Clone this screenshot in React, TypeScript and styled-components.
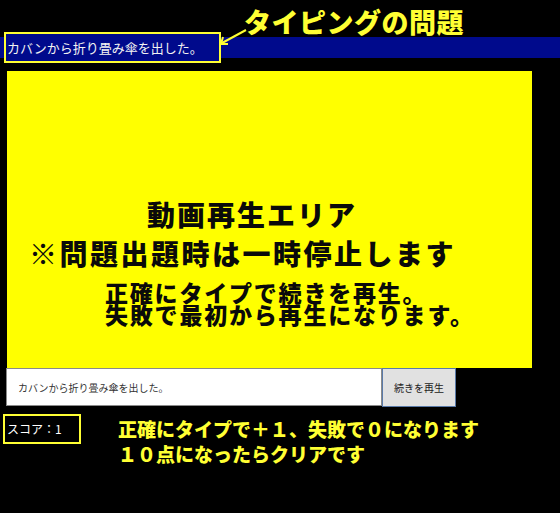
import React from "react";
import styled, { createGlobalStyle } from "styled-components";

const GlobalStyle = createGlobalStyle`
  html, body {
    margin: 0;
    padding: 0;
    background: #000;
  }
  body {
    font-family: "Noto Sans CJK JP", "Noto Sans", sans-serif;
  }
`;

const question = "カバンから折り畳み傘を出した。";

export default function App() {
  return (
    <>
      <GlobalStyle />
      <Page>
        <TitleRow>
          <NoteTitle>タイピングの問題</NoteTitle>
        </TitleRow>
        <QuestionRow>
          <QuestionBox>{question}</QuestionBox>
          <Arrow width="30" height="20" viewBox="0 0 30 20">
            <line x1="28" y1="2" x2="4" y2="15" stroke="#ffff33" strokeWidth="2" />
            <polyline points="5,9 3,16 10,16" fill="none" stroke="#ffff33" strokeWidth="2" />
          </Arrow>
        </QuestionRow>
        <VideoArea>
          <VideoLine size={28} lh={39} spacing={2} indent={140}>動画再生エリア</VideoLine>
          <VideoLine size={28} lh={39} spacing={2.5} indent={22}>※問題出題時は一時停止します</VideoLine>
          <VideoLine size={23} lh={22} spacing={1.8} indent={98} top={8}>
            正確にタイプで続きを再生。
            <br />
            失敗で最初から再生になります。
          </VideoLine>
        </VideoArea>
        <InputRow>
          <AnswerInput defaultValue={question} />
          <PlayButton>続きを再生</PlayButton>
        </InputRow>
        <ScoreRow>
          <ScoreBox>スコア：1</ScoreBox>
          <Hint>
            正確にタイプで＋１、失敗で０になります
            <br />
            １０点になったらクリアです
          </Hint>
        </ScoreRow>
      </Page>
    </>
  );
}

const Page = styled.div`
  width: 560px;
  height: 513px;
  background: #000;
  display: flex;
  flex-direction: column;
  position: relative;
  overflow: hidden;
`;

const TitleRow = styled.div`
  height: 32px;
  padding-left: 244px;
  display: flex;
  align-items: flex-start;
`;

const NoteTitle = styled.div`
  margin-top: 2px;
  color: #ffff33;
  font-size: 27px;
  font-weight: 900;
  line-height: normal;
  letter-spacing: 0.5px;
  white-space: nowrap;
`;

const QuestionRow = styled.div`
  height: 31px;
  position: relative;
  background: linear-gradient(
    to bottom,
    transparent 5px,
    #000a8c 5px,
    #000a8c 26px,
    transparent 26px
  );
  display: flex;
`;

const QuestionBox = styled.div`
  margin-left: 4px;
  width: 212px;
  height: 27px;
  border: 2px solid #ffff33;
  background: #000a8c;
  color: #f2f2f2;
  font-size: 13px;
  line-height: 27px;
  padding-left: 1px;
  white-space: nowrap;
`;

const Arrow = styled.svg`
  position: absolute;
  left: 218px;
  top: -4px;
`;

const VideoArea = styled.div`
  margin: 8px 0 0 7px;
  width: 525px;
  height: 297px;
  background: #ffff00;
  padding-top: 124px;
  box-sizing: border-box;
  display: flex;
  flex-direction: column;
  align-items: flex-start;
`;

const VideoLine = styled.div<{
  size: number;
  lh: number;
  spacing: number;
  indent: number;
  top?: number;
}>`
  margin-left: ${(p) => p.indent}px;
  margin-top: ${(p) => p.top ?? 0}px;
  font-size: ${(p) => p.size}px;
  line-height: ${(p) => p.lh}px;
  letter-spacing: ${(p) => p.spacing}px;
  font-weight: 900;
  color: #0a0a0a;
  white-space: nowrap;
`;

const InputRow = styled.div`
  display: flex;
  align-items: flex-start;
  padding-left: 6px;
`;

const AnswerInput = styled.input`
  width: 376px;
  height: 38px;
  box-sizing: border-box;
  border: 1px solid #8a8a8a;
  background: #fff;
  padding: 0 0 0 11px;
  font-family: "Noto Sans CJK JP", sans-serif;
  font-size: 10px;
  color: #333;
  outline: none;
`;

const PlayButton = styled.button`
  width: 74px;
  height: 39px;
  box-sizing: border-box;
  border: 1px solid #5a7aa8;
  background: #e1e1e1;
  font-family: "Noto Sans CJK JP", sans-serif;
  font-size: 10px;
  color: #222;
  padding: 0;
`;

const ScoreRow = styled.div`
  margin-top: 7px;
  padding-left: 3px;
  display: flex;
  align-items: flex-start;
  gap: 37px;
`;

const ScoreBox = styled.div`
  width: 72px;
  height: 26px;
  border: 2px solid #ffff33;
  color: #fff;
  font-family: "Noto Sans CJK JP", "Liberation Serif", serif;
  font-size: 12px;
  line-height: 26px;
  padding-left: 2px;
  box-sizing: content-box;
`;

const Hint = styled.div`
  color: #ffff33;
  font-size: 19px;
  font-weight: 900;
  line-height: 25px;
  margin-top: 2px;
  white-space: nowrap;
`;
